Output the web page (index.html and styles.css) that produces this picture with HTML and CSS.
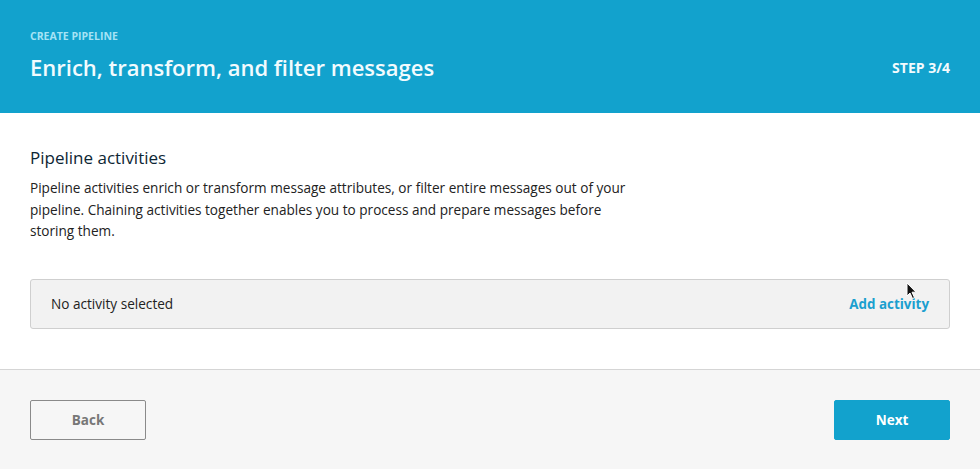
FILE: index.html
```html
<!DOCTYPE html>
<html>
<head>
<meta charset="utf-8">
<link rel="stylesheet" href="styles.css">
</head>
<body>
<div class="page">
  <header class="hero">
    <div class="hero-text">
      <div class="eyebrow">CREATE PIPELINE</div>
      <h1 class="title">Enrich, transform, and filter messages</h1>
    </div>
    <div class="step">STEP 3/4</div>
  </header>
  <main class="content">
    <h2 class="section-title">Pipeline activities</h2>
    <p class="desc">Pipeline activities enrich or transform message attributes, or filter entire messages out of your pipeline. Chaining activities together enables you to process and prepare messages before storing them.</p>
    <div class="activity-box">
      <span class="empty">No activity selected</span>
      <a class="add-link">Add activity</a>
      <svg class="cursor" width="12" height="18" viewBox="0 0 12 18"><path d="M1 1 L1 14 L4 11 L6.5 16.5 L8.5 15.6 L6 10.2 L10 10.2 Z" fill="#111" stroke="#fff" stroke-width="1"/></svg>
    </div>
  </main>
  <footer class="footer">
    <button class="btn btn-back">Back</button>
    <button class="btn btn-next">Next</button>
  </footer>
</div>
</body>
</html>
```
FILE: styles.css
```css
* { box-sizing: border-box; }
html, body { margin: 0; padding: 0; }
body {
  font-family: "Open Sans", "Liberation Sans", sans-serif;
  background: #ffffff;
  width: 980px;
  height: 469px;
  overflow: hidden;
}
.page { display: flex; flex-direction: column; height: 469px; }
.hero {
  background: #12a2cd;
  height: 113px;
  padding: 0 30px;
  display: flex;
  justify-content: space-between;
  align-items: flex-start;
}
.hero-text { padding-top: 30px; }
.eyebrow {
  font-size: 10.5px;
  font-weight: 700;
  color: #a6e3f5;
  line-height: 12px;
}
.title {
  margin: 10px 0 0;
  font-size: 22px;
  font-weight: 600;
  color: #f2fbfe;
  line-height: 30px;
}
.step {
  margin-top: 59px;
  font-size: 14px;
  font-weight: 700;
  color: #f2fbfe;
  line-height: 18px;
}
.content {
  padding: 34px 30px 0;
  height: 257px;
  border-bottom: 1px solid #d5d5d5;
}
.section-title {
  margin: 0;
  font-size: 17px;
  font-weight: 400;
  color: #0d2634;
  line-height: 22px;
}
.desc {
  margin: 8px 0 0;
  width: 612px;
  font-size: 13.6px;
  color: #222;
  line-height: 21.5px;
}
.activity-box {
  position: relative;
  margin-top: 37px;
  height: 50px;
  background: #f2f2f2;
  border: 1px solid #cfcfcf;
  border-radius: 3px;
  padding: 0 20px;
  display: flex;
  align-items: center;
  justify-content: space-between;
}
.empty { font-size: 13.6px; color: #222; }
.add-link { font-size: 13.4px; font-weight: 700; color: #1a9fcf; }
.cursor { position: absolute; left: 875px; top: 2px; }
.footer {
  flex: 1;
  background: #f6f6f6;
  padding: 30px 30px 0;
  display: flex;
  justify-content: space-between;
  align-items: flex-start;
}
.btn {
  width: 116px;
  height: 40px;
  border-radius: 2px;
  font-family: inherit;
  font-size: 13.5px;
  font-weight: 700;
}
.btn-back {
  background: #f6f6f6;
  border: 1px solid #8a8a8a;
  color: #777;
}
.btn-next {
  background: #12a2cd;
  border: 1px solid #12a2cd;
  color: #fff;
}
```
